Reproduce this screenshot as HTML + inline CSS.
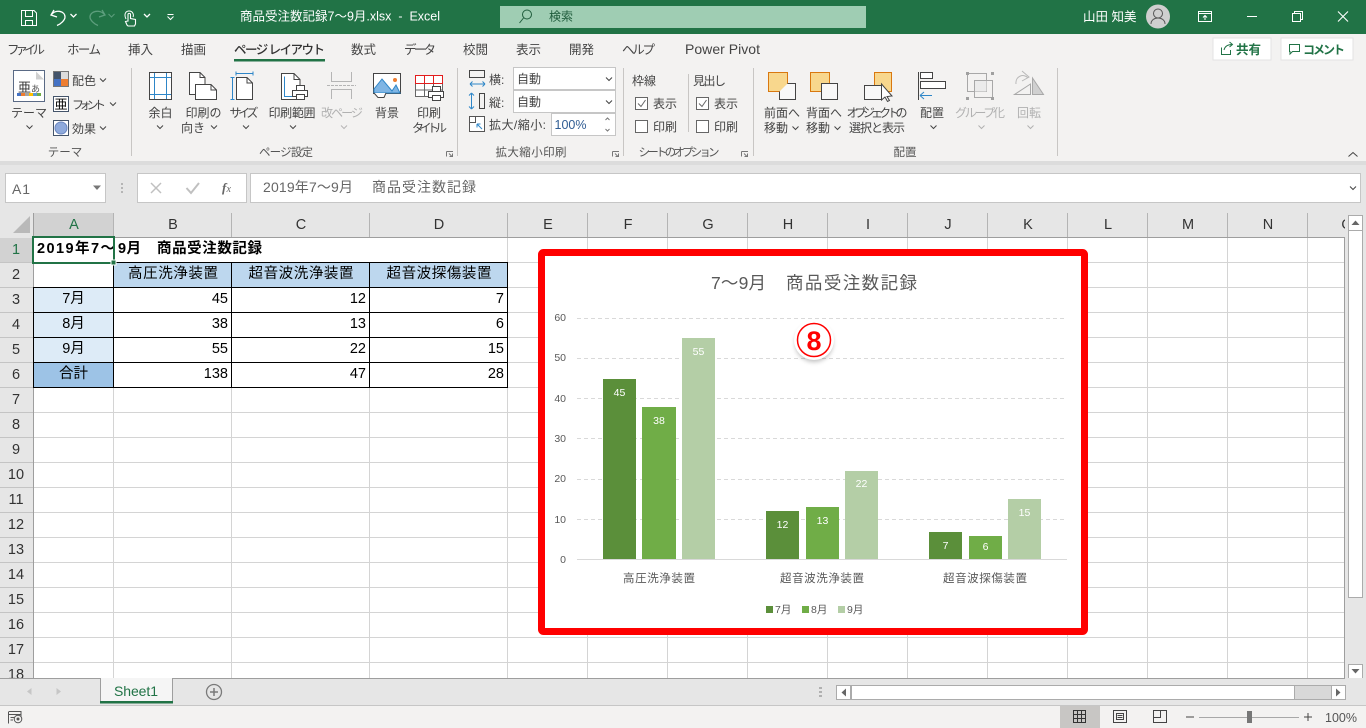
<!DOCTYPE html>
<html lang="ja"><head><meta charset="utf-8"><title>商品受注数記録7～9月.xlsx - Excel</title>
<style>
html,body{margin:0;padding:0;background:#fff;overflow:hidden}
svg{display:block;position:absolute;left:0;top:0}
text{font-family:"Liberation Sans","Noto Sans CJK JP",sans-serif;font-size:12px;fill:#444;white-space:pre}
.c{text-anchor:middle}.r{text-anchor:end}
.tab{font-size:12.5px;fill:#444}
.rb{font-size:12px;fill:#444}
.dis{fill:#b1b1b1}
.lb{font-size:11.5px;fill:#555}
.w{fill:#fff}
.cell{font-size:14.5px;fill:#000}
.hd{font-size:14.5px;fill:#333}
.ax{font-size:10.5px;fill:#595959}
.cat{font-size:11.5px;fill:#595959}
.dl{font-size:10.5px;fill:#fff}
.ic{fill:none;stroke:#444;stroke-width:1}
.f{fill:#fff;stroke:#444;stroke-width:1}
.ch{fill:none;stroke:#444;stroke-width:1}
</style></head><body>
<svg width="1366" height="728" viewBox="0 0 1366 728" xmlns="http://www.w3.org/2000/svg">
<defs>
<path id="chev" d="M-3 -1.5L0 1.5L3 -1.5"/>
<filter id="sh" x="-40%" y="-40%" width="180%" height="180%"><feGaussianBlur stdDeviation="2.5"/></filter>
</defs>

<!-- Title bar -->
<rect width="1366" height="34" fill="#217346"/>
<g fill="none" stroke="#fff" stroke-width="1">
<path d="M21.500 10.500H34L36.500 13V25.500H21.500Z"/><path d="M25.500 10.500V16.500H32.500V10.500M25.500 25.500V20.500H32.500V25.500"/>
<path d="M54 10L51 15L57 17" stroke-width="1.300"/><path d="M51.500 14.500C56 9 65 11 65 17C65 20 61 24 57 25.500" stroke-width="1.300"/>
<path d="M102 10L105 15L99 17" stroke="#5d9e7d" stroke-width="1.300"/><path d="M104.500 14.500C100 9 90 11 90 17C90 20 94 24 98 25.500" stroke="#5d9e7d" stroke-width="1.300"/>
<path d="M126 19C124 15 125 11 129 11C133 11 134 15 133 17"/>
<path d="M127 25L125.500 21.500L128 21V14.500C128 13 130.500 13 130.500 14.500V18.500L135.500 19.500V24L134.500 26H128Z" stroke-width="1.100"/>
<use href="#chev" x="73.500" y="15.500" stroke-width="1.300"/><use href="#chev" x="111.500" y="15.500" stroke="#5d9e7d"/><use href="#chev" x="147" y="15.500" stroke-width="1.300"/><use href="#chev" x="170.500" y="18"/>
<path d="M167.500 14.500H173.500"/>
</g>
<text x="240" y="20.500" class="w" style="font-size:12.5px" textLength="200">商品受注数記録7～9月.xlsx  -  Excel</text>
<rect x="500" y="6" width="366" height="22" fill="#9fcdb3"/>
<circle cx="527" cy="14.500" r="4.500" fill="none" stroke="#1f5c3c"/><path d="M523.500 18L519.500 23" stroke="#1f5c3c" fill="none"/>
<text x="549" y="20.500" style="font-size:12px;fill:#1f5c3c">検索</text>
<text x="1083" y="21" class="w" style="font-size:12.5px">山田 知美</text>
<circle cx="1158" cy="16.500" r="12" fill="#cfcfcf"/>
<circle cx="1158" cy="13.500" r="4.500" fill="none" stroke="#555"/><path d="M1151 24C1151 16 1165 16 1165 24" fill="none" stroke="#555"/>
<g fill="none" stroke="#fff">
<path d="M1198.500 11.500H1211.500V21.500H1198.500ZM1198.500 13.500H1211.500M1205 20V15.500M1203 17.500L1205 15.500L1207 17.500"/>
<path d="M1247 16.500H1257"/>
<path d="M1292.500 13.500H1300.500V21.500H1292.500ZM1294.500 13.500V11.500H1302.500V19.500H1300.500"/>
<path d="M1338 11.500L1348 21.500M1348 11.500L1338 21.500" stroke-width="1.100"/>
</g>

<!-- Ribbon -->
<rect y="34" width="1366" height="127" fill="#f3f2f1"/>
<rect y="161" width="1366" height="4" fill="#dcdcdc"/>
<text x="7" y="54" class="tab" textLength="38">ファイル</text>
<text x="67" y="54" class="tab" textLength="34">ホーム</text>
<text x="128" y="54" class="tab">挿入</text>
<text x="181" y="54" class="tab">描画</text>
<text x="234" y="54" class="tab" style="fill:#333;font-weight:500" textLength="91">ページ レイアウト</text>
<rect x="234" y="59" width="91" height="2.500" fill="#217346"/>
<text x="351" y="54" class="tab">数式</text>
<text x="404" y="54" class="tab" textLength="32">データ</text>
<text x="463" y="54" class="tab">校閲</text>
<text x="516" y="54" class="tab">表示</text>
<text x="569" y="54" class="tab">開発</text>
<text x="622" y="54" class="tab" textLength="33">ヘルプ</text>
<text x="685" y="54" class="tab" style="font-size:14px" textLength="75">Power Pivot</text>

<rect x="1213" y="38" width="58" height="22" fill="#fff" stroke="#e3e3e3"/>
<rect x="1281" y="38" width="72" height="22" fill="#fff" stroke="#e3e3e3"/>
<path d="M1221.500 47.500V54.500H1230.500V50M1224 50C1225 46 1228 44.500 1232 44.500M1229.500 42L1232.500 44.500L1229.500 47" fill="none" stroke="#217346"/>
<text x="1236" y="54" style="font-size:12.500px;font-weight:700;fill:#217346">共有</text>
<path d="M1289.500 44.500H1299.500V51.500H1292.500L1290 54V51.500H1289.500Z" fill="none" stroke="#217346"/>
<text x="1303" y="54" style="font-size:12px;font-weight:700;fill:#217346" textLength="42">コメント</text>

<!-- separators -->
<g stroke="#c8c6c4" stroke-width="1">
<path d="M131.500 68V156M457.500 68V156M623.500 68V156M753.500 68V156M1057.500 68V156"/>
<path d="M688.500 74V132" />
</g>

<!-- Theme group -->
<rect x="13.500" y="70.500" width="31" height="31" fill="#fff" stroke="#5a6a85"/>
<path d="M36 71.500L44 79.500H36Z" fill="#d0d0d0"/>
<text x="18" y="92" style="font-size:13px;fill:#333">亜</text><text x="31" y="92" style="font-size:9px;fill:#555">あ</text>
<rect x="17" y="93" width="4" height="3" fill="#4472c4"/><rect x="21" y="93" width="4" height="3" fill="#ed7d31"/><rect x="25" y="93" width="4" height="3" fill="#a5a5a5"/><rect x="29" y="93" width="4" height="3" fill="#ffc000"/><rect x="33" y="93" width="4" height="3" fill="#5b9bd5"/><rect x="37" y="93" width="4" height="3" fill="#70ad47"/>
<text x="29" y="117" class="rb c">テーマ</text><use href="#chev" x="29.500" y="127" class="ch"/>
<rect x="53" y="71" width="8" height="8" fill="#44546a"/><rect x="61" y="71" width="8" height="8" fill="#dcdcdc"/><rect x="53" y="79" width="8" height="8" fill="#4472c4"/><rect x="61" y="79" width="8" height="8" fill="#ed7d31"/>
<rect x="53.500" y="71.500" width="15" height="15" fill="none" stroke="#777"/>
<text x="72" y="85" class="rb">配色</text><use href="#chev" x="103" y="80" class="ch"/>
<rect x="53.500" y="96.500" width="15" height="15" fill="#fff" stroke="#44546a"/>
<text x="54.500" y="109" style="font-size:13px;fill:#000">亜</text>
<text x="72" y="109" class="rb" textLength="34">フォント</text><use href="#chev" x="113" y="104" class="ch"/>
<rect x="53.500" y="120.500" width="15" height="15" fill="#fff" stroke="#44546a"/><circle cx="61" cy="128" r="6" fill="#8faadc" stroke="#6a86c0"/>
<text x="72" y="133" class="rb">効果</text><use href="#chev" x="103" y="128" class="ch"/>
<text x="65" y="156" class="lb c">テーマ</text>

<!-- Margins -->
<rect x="149.500" y="72.500" width="22" height="27" class="f"/>
<path d="M154.500 73V99M166.500 73V99M150 77.500H171M150 94.500H171" stroke="#2e86c8" fill="none"/>
<text x="160.500" y="117" class="rb c">余白</text><use href="#chev" x="160" y="127" class="ch"/>
<!-- Orientation -->
<path d="M189.500 72.500H200L205 77.500V94.500H189.500Z" class="f"/><path d="M200 72.500V77.500H205" class="ic"/>
<path d="M195.500 84.500H211L216.500 90V99.500H195.500Z" class="f"/><path d="M211 84.500V90H216.500" class="ic"/>
<text x="203.500" y="117" class="rb c">印刷の</text><text x="193" y="132" class="rb c">向き</text><use href="#chev" x="214" y="127" class="ch"/>
<!-- Size -->
<path d="M236.500 77.500H247L252.500 83V99.500H236.500Z" class="f"/><path d="M247 77.500V83H252.500" class="ic"/>
<path d="M236 73.500H253M236 71.500V75.500M253 71.500V75.500M232.500 77V99.500M230.500 77.500H234.500M230.500 99.500H234.500" fill="none" stroke="#2e86c8"/>
<text x="244" y="117" class="rb c" textLength="29">サイズ</text><use href="#chev" x="246" y="127" class="ch"/>
<!-- Print area -->
<path d="M281.500 73.500H294L300 79.500V99.500H281.500Z" class="f"/><path d="M294 73.500V79.500H300" class="ic"/>
<path d="M284.500 76.500V96.500H292" fill="none" stroke="#2e86c8"/>
<rect x="296.500" y="85.500" width="8" height="5" class="f"/><rect x="292.500" y="90.500" width="15" height="6" class="f"/><rect x="296.500" y="94.500" width="8" height="5" class="f"/>
<text x="292" y="117" class="rb c" textLength="47">印刷範囲</text><use href="#chev" x="293" y="127" class="ch"/>
<!-- Breaks -->
<path d="M331.500 72V81.500H351.500V72M331.500 99V89.500H351.500V99" fill="none" stroke="#b5b5b5"/><path d="M327 85.500H356" stroke="#b5b5b5" stroke-dasharray="3 1" fill="none"/>
<text x="342" y="117" class="rb c dis" textLength="42">改ページ</text><use href="#chev" x="344" y="127" stroke="#b5b5b5" fill="none"/>
<!-- Background -->
<rect x="373.500" y="73.500" width="27" height="20" fill="#fff" stroke="#444"/>
<path d="M374 93V89L382 79L392 91L396 85L400 93Z" fill="#7fb5e4" stroke="#2e86c8"/>
<circle cx="395" cy="80" r="2" fill="#ed7d31"/><path d="M374 93L378 97.500H384L386 93" fill="#fff" stroke="#444"/>
<text x="387" y="117" class="rb c">背景</text>
<!-- Print titles -->
<rect x="415.500" y="75.500" width="27" height="21" fill="#fff" stroke="#666"/>
<path d="M415.500 83.500H442.500M424.500 75.500V96.500M433.500 75.500V96.500M415.500 90H442" fill="none" stroke="#666"/>
<rect x="415.500" y="75.500" width="27" height="8" fill="none" stroke="#e21d1d"/><path d="M424.500 75.500V83.500M433.500 75.500V83.500" stroke="#e21d1d"/>
<rect x="432.500" y="86.500" width="8" height="5" class="f"/><rect x="428.500" y="91.500" width="15" height="6" class="f"/><rect x="432.500" y="95.500" width="8" height="5" class="f"/>
<text x="429" y="117" class="rb c">印刷</text><text x="429.500" y="132" class="rb c" textLength="35">タイトル</text>
<text x="286" y="156" class="lb c" textLength="54">ページ設定</text>
<path d="M446.500 151.500H453M446.500 151.500V156.500M449 153.500L452 156.500M449.500 156.500H452.500V153.500" fill="none" stroke="#777"/>

<!-- Scale to fit -->
<rect x="469.500" y="70.500" width="15" height="7" fill="none" stroke="#444"/><path d="M470 84H485M470 84L472.500 81.500M470 84L472.500 86.500M485 84L482.500 81.500M485 84L482.500 86.500" fill="none" stroke="#2e86c8"/>
<text x="489" y="84" class="rb">横:</text>
<rect x="513.500" y="67.500" width="102" height="22" fill="#fff" stroke="#c6c6c6"/>
<text x="517" y="83" class="rb">自動</text><use href="#chev" x="609" y="79" class="ch"/>
<rect x="479.500" y="93.500" width="5" height="15" fill="none" stroke="#444"/><path d="M471.500 93V109M471.500 93L469 95.500M471.500 93L474 95.500M471.500 109L469 106.500M471.500 109L474 106.500" fill="none" stroke="#2e86c8"/>
<text x="489" y="107" class="rb">縦:</text>
<rect x="513.500" y="90.500" width="102" height="22" fill="#fff" stroke="#c6c6c6"/>
<text x="517" y="106" class="rb">自動</text><use href="#chev" x="609" y="102" class="ch"/>
<rect x="469.500" y="116.500" width="15" height="15" fill="#fff" stroke="#555"/><path d="M469.500 122.500H475.500V116.500" fill="none" stroke="#555"/><path d="M482 129L477 124M477 124H480.500M477 124V127.500" fill="none" stroke="#2e86c8"/>
<text x="489" y="129" class="rb" textLength="57">拡大/縮小:</text>
<rect x="551.500" y="113.500" width="64" height="22" fill="#fff" stroke="#c6c6c6"/>
<text x="554.500" y="129" style="font-size:12.500px;fill:#2f5c93">100%</text>
<path d="M605.500 120L607.500 118L609.500 120M605.500 129L607.500 131L609.500 129" fill="none" stroke="#777"/>
<text x="531" y="156" class="lb c" textLength="71">拡大縮小印刷</text>
<path d="M612.500 151.500H619M612.500 151.500V156.500M615 153.500L618 156.500M615.500 156.500H618.500V153.500" fill="none" stroke="#777"/>

<!-- Sheet options -->
<text x="632" y="85" class="rb">枠線</text><text x="693" y="85" class="rb" textLength="33">見出し</text>
<rect x="635.500" y="97.500" width="12" height="12" fill="#fff" stroke="#666"/><path d="M638 103.500L641 106.500L645.500 100" fill="none" stroke="#666"/>
<text x="653" y="108" class="rb">表示</text>
<rect x="635.500" y="120.500" width="12" height="12" fill="#fff" stroke="#666"/><text x="653" y="131" class="rb">印刷</text>
<rect x="696.500" y="97.500" width="12" height="12" fill="#fff" stroke="#666"/><path d="M699 103.500L702 106.500L706.500 100" fill="none" stroke="#666"/>
<text x="714" y="108" class="rb">表示</text>
<rect x="696.500" y="120.500" width="12" height="12" fill="#fff" stroke="#666"/><text x="714" y="131" class="rb">印刷</text>
<text x="679" y="156" class="lb c" textLength="81">シートのオプション</text>
<path d="M741.500 151.500H748M741.500 151.500V156.500M744 153.500L747 156.500M744.500 156.500H747.500V153.500" fill="none" stroke="#777"/>

<!-- Arrange -->
<rect x="768.500" y="72.500" width="19" height="19" fill="#f8d78d" stroke="#d9780f"/>
<path d="M787.500 83.500H795.500V99.500H779.500V91.500" fill="#f8f8f8" stroke="#444"/>
<text x="782" y="117" class="rb c">前面へ</text><text x="776" y="132" class="rb c">移動</text><use href="#chev" x="795.500" y="128" class="ch"/>
<rect x="810.500" y="72.500" width="19" height="19" fill="#f8d78d" stroke="#d9780f"/>
<rect x="821.500" y="83.500" width="16" height="16" fill="#f8f8f8" stroke="#444"/>
<text x="824" y="117" class="rb c">背面へ</text><text x="818" y="132" class="rb c">移動</text><use href="#chev" x="837.500" y="128" class="ch"/>
<rect x="874.500" y="72.500" width="17" height="19" fill="#f8d78d" stroke="#d9780f"/>
<rect x="864.500" y="85.500" width="17" height="14" fill="#f8f8f8" stroke="#444"/>
<path d="M881.500 84V100L885 97L887.500 101.500L889.500 100.500L887 96.500L892 96Z" fill="#fff" stroke="#444"/>
<text x="877" y="117" class="rb c" textLength="61">オブジェクトの</text><text x="877" y="132" class="rb c" textLength="56">選択と表示</text>
<path d="M918.500 72V100" stroke="#444"/><rect x="920.500" y="72.500" width="12" height="6" fill="#fff" stroke="#444"/><rect x="920.500" y="81.500" width="25" height="7" fill="#fff" stroke="#444"/>
<path d="M920 95.500H932M920 95.500L924 92M920 95.500L924 99" fill="none" stroke="#2e86c8"/>
<text x="932" y="117" class="rb c">配置</text><use href="#chev" x="933.500" y="127" class="ch"/>
<g fill="none" stroke="#a8a8a8">
<rect x="967.500" y="73.500" width="19" height="18"/><rect x="974.500" y="80.500" width="12" height="11" fill="#ebebeb" stroke="none"/><rect x="974.500" y="80.500" width="18" height="17"/>
</g>
<g fill="#a0a0a0"><rect x="966" y="72" width="3" height="3"/><rect x="991" y="72" width="3" height="3"/><rect x="966" y="97" width="3" height="3"/><rect x="991" y="97" width="3" height="3"/></g>
<text x="980" y="117" class="rb c dis" textLength="50">グループ化</text><use href="#chev" x="981.500" y="127" stroke="#b0b0b0" fill="none"/>
<path d="M1030.500 84V94.500H1014.500Z" fill="#f3f2f1" stroke="#a8a8a8"/><path d="M1032.500 78L1043.500 94.500H1032.500Z" fill="#d0d0d0" stroke="#a8a8a8"/>
<path d="M1028 78C1024 73 1015 76 1016 84M1022 71L1029 77L1022 81" fill="none" stroke="#b8b8b8"/>
<text x="1029" y="117" class="rb c dis">回転</text><use href="#chev" x="1030.500" y="127" stroke="#b0b0b0" fill="none"/>
<text x="905" y="156" class="lb c">配置</text>
<path d="M1348.500 156.500L1353 152.500L1357.500 156.500" fill="none" stroke="#444"/>

<!-- Formula bar -->
<rect y="165" width="1366" height="48" fill="#e6e6e6"/>
<rect x="5.500" y="173.500" width="100" height="29" fill="#fff" stroke="#c6c6c6"/>
<text x="12" y="194" style="font-size:14px;fill:#666" textLength="18">A1</text>
<path d="M93 185.500H101L97 190Z" fill="#777"/>
<g fill="#b5b5b5"><rect x="121" y="183" width="2" height="2"/><rect x="121" y="187" width="2" height="2"/><rect x="121" y="191" width="2" height="2"/></g>
<rect x="137.500" y="173.500" width="109" height="29" fill="#fff" stroke="#c6c6c6"/>
<path d="M151 183L161 193M161 183L151 193" stroke="#c0c0c0" stroke-width="1.500" fill="none"/>
<path d="M186.500 188L191 193L199 183" stroke="#c0c0c0" stroke-width="2" fill="none"/>
<text x="222" y="192" style="font-size:13px;font-style:italic;font-weight:700;font-family:'Liberation Serif',serif;fill:#666">f</text><text x="226.500" y="192" style="font-size:10px;font-style:italic;font-family:'Liberation Serif',serif;fill:#666">x</text>
<rect x="250.500" y="173.500" width="1110" height="29" fill="#fff" stroke="#c6c6c6"/>
<text x="263" y="192" style="font-size:14px;fill:#666" textLength="90">2019年7～9月</text>
<text x="372" y="192" style="font-size:14px;fill:#666" textLength="104">商品受注数記録</text>
<use href="#chev" x="1353" y="188" class="ch"/>

<!-- Grid -->
<rect x="0" y="213" width="1366" height="465" fill="#e6e6e6"/>
<rect x="34" y="238" width="1310" height="440" fill="#fff"/>
<rect x="34" y="213" width="80" height="24" fill="#d2d2d2"/>
<rect x="0" y="238" width="33" height="24" fill="#d2d2d2"/>
<path d="M13 233H30V216Z" fill="#b9b9b9"/>
<path d="M113.500 238V678M231.500 238V678M369.500 238V678M507.500 238V678M587.500 238V678M667.500 238V678M747.500 238V678M827.500 238V678M907.500 238V678M987.500 238V678M1067.500 238V678M1147.500 238V678M1227.500 238V678M1307.500 238V678
M34 262.500H1344M34 287.500H1344M34 312.500H1344M34 337.500H1344M34 362.500H1344M34 387.500H1344M34 412.500H1344M34 437.500H1344M34 462.500H1344M34 487.500H1344M34 512.500H1344M34 537.500H1344M34 562.500H1344M34 587.500H1344M34 612.500H1344M34 637.500H1344M34 662.500H1344" stroke="#d4d4d4" fill="none"/>
<path d="M113.500 213V237M231.500 213V237M369.500 213V237M507.500 213V237M587.500 213V237M667.500 213V237M747.500 213V237M827.500 213V237M907.500 213V237M987.500 213V237M1067.500 213V237M1147.500 213V237M1227.500 213V237M1307.500 213V237" stroke="#b4b4b4" fill="none"/>
<path d="M0 262.500H33M0 287.500H33M0 312.500H33M0 337.500H33M0 362.500H33M0 387.500H33M0 412.500H33M0 437.500H33M0 462.500H33M0 487.500H33M0 512.500H33M0 537.500H33M0 562.500H33M0 587.500H33M0 612.500H33M0 637.500H33M0 662.500H33" stroke="#c4c4c4" fill="none"/>
<path d="M33.500 213V678M33 237.500H1344M1344.500 237V678" stroke="#9e9e9e" fill="none"/>

<g>
<text x="74" y="229" class="hd c" style="fill:#217346">A</text><text x="173" y="229" class="hd c">B</text><text x="301" y="229" class="hd c">C</text><text x="439" y="229" class="hd c">D</text><text x="548" y="229" class="hd c">E</text><text x="628" y="229" class="hd c">F</text><text x="708" y="229" class="hd c">G</text><text x="788" y="229" class="hd c">H</text><text x="868" y="229" class="hd c">I</text><text x="948" y="229" class="hd c">J</text><text x="1028" y="229" class="hd c">K</text><text x="1108" y="229" class="hd c">L</text><text x="1188" y="229" class="hd c">M</text><text x="1268" y="229" class="hd c">N</text><text x="1347" y="229" class="hd c">O</text>
<text x="16" y="254" class="hd c" style="fill:#217346">1</text><text x="16" y="279" class="hd c">2</text><text x="16" y="304" class="hd c">3</text><text x="16" y="329" class="hd c">4</text><text x="16" y="354" class="hd c">5</text><text x="16" y="379" class="hd c">6</text><text x="16" y="404" class="hd c">7</text><text x="16" y="429" class="hd c">8</text><text x="16" y="454" class="hd c">9</text><text x="16" y="479" class="hd c">10</text><text x="16" y="504" class="hd c">11</text><text x="16" y="529" class="hd c">12</text><text x="16" y="554" class="hd c">13</text><text x="16" y="579" class="hd c">14</text><text x="16" y="604" class="hd c">15</text><text x="16" y="629" class="hd c">16</text><text x="16" y="654" class="hd c">17</text><text x="16" y="679" class="hd c">18</text>
</g>

<!-- Table fills -->
<rect x="114" y="263" width="393" height="24" fill="#bdd7ee"/>
<rect x="34" y="288" width="79" height="74" fill="#ddebf7"/>
<rect x="34" y="363" width="79" height="24" fill="#9dc3e6"/>
<rect x="34" y="238" width="473" height="24" fill="#fff"/>
<path d="M113 262.500H508M33 287.500H508M33 312.500H508M33 337.500H508M33 362.500H508M33 387.500H508M113.500 262V388M231.500 262V388M369.500 262V388M507.500 262V388M33.500 287V388" stroke="#000" fill="none"/>
<text x="37" y="253" class="cell" style="font-weight:700" textLength="78">2019年7～</text>
<text x="118" y="253" class="cell" style="font-weight:700" textLength="23">9月</text>
<text x="157" y="253" class="cell" style="font-weight:700" textLength="105">商品受注数記録</text>
<text x="173" y="278" class="cell c" textLength="90">高圧洗浄装置</text><text x="301" y="278" class="cell c" textLength="105">超音波洗浄装置</text><text x="439" y="278" class="cell c" textLength="105">超音波探傷装置</text>
<text x="73.500" y="303" class="cell c">7月</text><text x="73.500" y="328" class="cell c">8月</text><text x="73.500" y="353" class="cell c">9月</text><text x="73.500" y="378" class="cell c">合計</text>
<text x="228" y="303" class="cell r">45</text><text x="366" y="303" class="cell r">12</text><text x="504" y="303" class="cell r">7</text>
<text x="228" y="328" class="cell r">38</text><text x="366" y="328" class="cell r">13</text><text x="504" y="328" class="cell r">6</text>
<text x="228" y="353" class="cell r">55</text><text x="366" y="353" class="cell r">22</text><text x="504" y="353" class="cell r">15</text>
<text x="228" y="378" class="cell r">138</text><text x="366" y="378" class="cell r">47</text><text x="504" y="378" class="cell r">28</text>
<!-- selection -->
<rect x="33" y="237" width="81" height="26" fill="none" stroke="#217346" stroke-width="2"/>
<rect x="111" y="260" width="5" height="5" fill="#217346" stroke="#fff" stroke-width="1"/>

<!-- Chart -->
<rect x="541.500" y="252.500" width="543" height="379" rx="2" fill="#fff" stroke="#f00" stroke-width="7"/>
<text x="711" y="289" style="font-size:17.500px;fill:#595959" textLength="55">7～9月</text>
<text x="786" y="289" style="font-size:17.500px;fill:#595959" textLength="131">商品受注数記録</text>
<path d="M577 318.500H1065M577 358.500H1065M577 398.500H1065M577 438.500H1065M577 479.500H1065M577 519.500H1065" stroke="#d9d9d9" stroke-dasharray="4 3" fill="none"/>
<path d="M577 559.500H1067" stroke="#d9d9d9" fill="none"/>
<g>
<text x="566" y="321" class="ax r">60</text><text x="566" y="361" class="ax r">50</text><text x="566" y="402" class="ax r">40</text><text x="566" y="442" class="ax r">30</text><text x="566" y="482" class="ax r">20</text><text x="566" y="523" class="ax r">10</text><text x="566" y="563" class="ax r">0</text>
</g>
<g fill="#5b8f3a">
<rect x="603" y="379" width="33" height="180"/><rect x="766" y="511" width="33" height="48"/><rect x="929" y="532" width="33" height="27"/>
</g>
<g fill="#70ad47">
<rect x="642" y="407" width="34" height="152"/><rect x="806" y="507" width="33" height="52"/><rect x="969" y="536" width="33" height="23"/>
</g>
<g fill="#b4cea6">
<rect x="682" y="338" width="33" height="221"/><rect x="845" y="471" width="33" height="88"/><rect x="1008" y="499" width="33" height="60"/>
</g>
<text x="619.500" y="396" class="dl c">45</text><text x="659" y="424" class="dl c">38</text><text x="698.500" y="355" class="dl c">55</text>
<text x="782.500" y="528" class="dl c">12</text><text x="822.500" y="524" class="dl c">13</text><text x="861.500" y="487" class="dl c">22</text>
<text x="945.500" y="549" class="dl c">7</text><text x="985.500" y="550" class="dl c">6</text><text x="1024.500" y="516" class="dl c">15</text>
<text x="659" y="582" class="cat c" textLength="72">高圧洗浄装置</text><text x="822" y="582" class="cat c" textLength="84">超音波洗浄装置</text><text x="985" y="582" class="cat c" textLength="84">超音波探傷装置</text>
<rect x="766" y="606" width="7" height="7" fill="#5b8f3a"/><text x="775" y="613" class="ax">7月</text>
<rect x="802" y="606" width="7" height="7" fill="#70ad47"/><text x="811" y="613" class="ax">8月</text>
<rect x="838" y="606" width="7" height="7" fill="#b4cea6"/><text x="847" y="613" class="ax">9月</text>
<circle cx="814" cy="343" r="19" fill="#000" opacity=".25" filter="url(#sh)"/>
<circle cx="814" cy="340" r="20" fill="#fff"/>
<circle cx="814" cy="340" r="16.500" fill="#fff" stroke="#f00" stroke-width="1.500"/>
<text x="814" y="350" class="c" style="font-size:27px;font-weight:700;fill:#f00">8</text>

<!-- Vertical scrollbar -->
<rect x="1345" y="213" width="21" height="466" fill="#e6e6e6"/>
<rect x="1348.500" y="230.500" width="14" height="367" fill="#fff" stroke="#ababab"/>
<rect x="1348.500" y="215.500" width="14" height="15" fill="#fff" stroke="#ababab"/><path d="M1351.500 225H1359.500L1355.500 220.500Z" fill="#666"/>
<rect x="1348.500" y="664.500" width="14" height="14" fill="#fff" stroke="#ababab"/><path d="M1351.500 669H1359.500L1355.500 673.500Z" fill="#666"/>

<!-- Tabs strip -->
<rect x="0" y="678" width="1366" height="28" fill="#e6e6e6"/>
<path d="M0 678.500H100M172 678.500H1345" stroke="#9e9e9e"/>
<rect x="100.500" y="678" width="72" height="24" fill="#f5f5f5"/>
<path d="M100.500 678V703M172.500 678V703" stroke="#9e9e9e"/>
<rect x="100" y="701" width="73" height="2.500" fill="#217346"/>
<text x="136" y="696" class="c" style="font-size:14px;fill:#217346" textLength="44">Sheet1</text>
<path d="M31.500 688L27 691.500L31.500 695Z" fill="#c6c6c6"/><path d="M56.500 688L61 691.500L56.500 695Z" fill="#c6c6c6"/>
<circle cx="214" cy="692" r="7.500" fill="none" stroke="#7a7a7a" stroke-width="1.300"/><path d="M214 688V696M210 692H218" stroke="#7a7a7a" stroke-width="1.500"/>
<g fill="#b0b0b0"><rect x="819" y="687" width="3" height="2"/><rect x="819" y="691" width="3" height="2"/><rect x="819" y="695" width="3" height="2"/></g>
<rect x="836.500" y="685.500" width="508" height="14" fill="#d8d8d8" stroke="#ababab"/>
<rect x="851.500" y="685.500" width="443" height="14" fill="#fff" stroke="#ababab"/>
<rect x="836.500" y="685.500" width="14" height="14" fill="#fff" stroke="#ababab"/><path d="M846 688.500V696.500L841.500 692.500Z" fill="#666"/>
<rect x="1331.500" y="685.500" width="14" height="14" fill="#fff" stroke="#ababab"/><path d="M1336 688.500V696.500L1340.500 692.500Z" fill="#666"/>

<!-- Status bar -->
<rect y="706" width="1366" height="22" fill="#f3f2f1"/><path d="M0 705.500H1366" stroke="#c6c6c6"/>
<path d="M8.500 712V723.500M21 717V711.500H8.500M8.500 714.500H21M10.500 717.500H14M10.500 720H13" fill="none" stroke="#555"/><circle cx="18" cy="719" r="3.800" fill="none" stroke="#555"/><circle cx="18" cy="719" r="1.500" fill="#555"/>
<rect x="1060" y="706" width="40" height="22" fill="#c8c6c4"/>
<path d="M1073.500 710.500H1085.500V722.500H1073.500ZM1077.500 710.500V722.500M1081.500 710.500V722.500M1073.500 714.500H1085.500M1073.500 718.500H1085.500" fill="none" stroke="#333"/>
<path d="M1113.500 710.500H1126.500V722.500H1113.500Z M1116.500 713.500H1123.500V719.500H1116.500ZM1117.500 715.500H1122.500M1117.500 717.500H1122.500" fill="none" stroke="#444"/>
<path d="M1153.500 710.500H1166.500V722.500H1153.500ZM1153.500 717.500H1160.500V710.500" fill="none" stroke="#444"/>
<path d="M1186 717H1194M1304 717H1312M1308 713V721" stroke="#444" fill="none"/>
<path d="M1199 717.500H1299" stroke="#a8a8a8"/><rect x="1247" y="711" width="5" height="12" fill="#777"/>
<text x="1325" y="722" style="font-size:12.500px;fill:#555" textLength="32">100%</text>
</svg>
</body></html>
